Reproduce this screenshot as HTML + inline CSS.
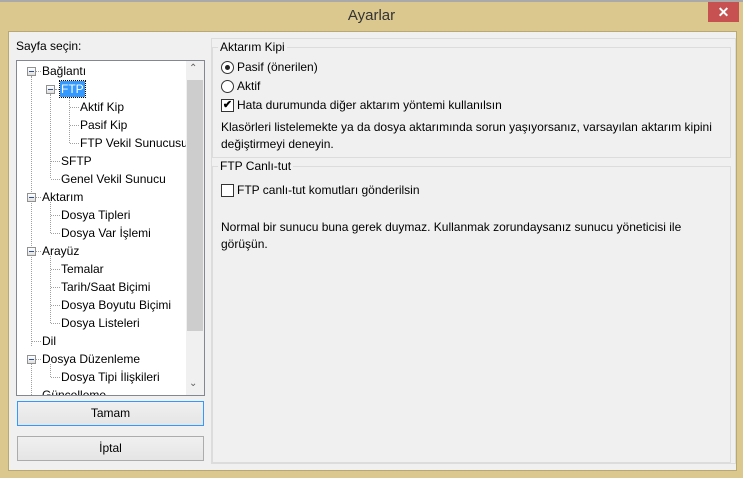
<!DOCTYPE html>
<html><head><meta charset="utf-8"><style>
*{margin:0;padding:0;box-sizing:border-box}
body{width:743px;height:478px;background:#dbc88f;font-family:"Liberation Sans",sans-serif;font-size:12px;color:#000;position:relative;overflow:hidden}
.a{position:absolute;white-space:nowrap}
.top{left:0;top:0;width:743px;height:2px;background:#a9a9a9}
.title{left:0;top:7px;width:743px;text-align:center;font-size:15px;color:#333}
.close{left:708px;top:2px;width:31px;height:20px;background:#c75050;color:#fff;text-align:center;font-size:14px;line-height:20px;font-weight:bold}
.client{left:8px;top:31px;width:729px;height:440px;background:#f0f0f0;border:1px solid #b9a874}
.tree{left:16px;top:60px;width:189px;height:336px;background:#fff;border:1px solid #828790;overflow:hidden}
.sb{left:186px;top:61px;width:18px;height:334px;background:#f0f0f0}
.thumb{left:187px;top:80px;width:16px;height:251px;background:#cdcdcd}
.btn{left:17px;width:187px;height:25px;background:linear-gradient(#f0f0f0,#e5e5e5);border:1px solid #acacac;text-align:center;line-height:23px}
.panel{left:211px;top:38px;width:525px;height:426px;border:1px solid #dcdcdc}
.grp{border:1px solid #dcdcdc}
.lbl{background:#f0f0f0;padding:0 2px}
.exp{width:9px;height:9px;border:1px solid #919191;background:linear-gradient(#fff,#e0e0e0)}
.exp:after{content:"";position:absolute;left:1px;top:3px;width:5px;height:1px;background:#2f4f8f}
.dv{border-left:1px dotted #a0a0a0;width:0}
.dh{border-top:1px dotted #a0a0a0;height:0}
.rad{width:13px;height:13px;border-radius:50%;border:1px solid #333;background:#fff}
.chk{width:13px;height:13px;border:1px solid #333;background:#fff}
</style></head><body>
<div class="a top"></div>
<div class="a title">Ayarlar</div>
<div class="a close">✕</div>
<div class="a client"></div>
<div class="a" style="left:16px;top:39px">Sayfa seçin:</div>
<div class="a tree"></div>
<!-- tree lines -->
<div class="a dv" style="left:31px;top:76px;height:270px"></div>
<div class="a dv" style="left:50px;top:94px;height:84px"></div>
<div class="a dv" style="left:69px;top:96px;height:47px"></div>
<div class="a dv" style="left:50px;top:202px;height:31px"></div>
<div class="a dv" style="left:50px;top:256px;height:67px"></div>
<div class="a dv" style="left:50px;top:364px;height:13px"></div>
<div class="a dv" style="left:31px;top:364px;height:31px"></div>
<div class="a dh" style="left:36px;top:71px;width:5px"></div>
<div class="a dh" style="left:55px;top:89px;width:4px"></div>
<div class="a dh" style="left:70px;top:107px;width:9px"></div>
<div class="a dh" style="left:70px;top:125px;width:9px"></div>
<div class="a dh" style="left:70px;top:143px;width:9px"></div>
<div class="a dh" style="left:51px;top:161px;width:9px"></div>
<div class="a dh" style="left:51px;top:179px;width:9px"></div>
<div class="a dh" style="left:36px;top:197px;width:5px"></div>
<div class="a dh" style="left:51px;top:215px;width:9px"></div>
<div class="a dh" style="left:51px;top:233px;width:9px"></div>
<div class="a dh" style="left:36px;top:251px;width:5px"></div>
<div class="a dh" style="left:51px;top:269px;width:9px"></div>
<div class="a dh" style="left:51px;top:287px;width:9px"></div>
<div class="a dh" style="left:51px;top:305px;width:9px"></div>
<div class="a dh" style="left:51px;top:323px;width:9px"></div>
<div class="a dh" style="left:32px;top:341px;width:9px"></div>
<div class="a dh" style="left:36px;top:359px;width:5px"></div>
<div class="a dh" style="left:51px;top:377px;width:9px"></div>
<div class="a exp" style="left:27px;top:67px"></div>
<div class="a exp" style="left:46px;top:85px"></div>
<div class="a exp" style="left:27px;top:193px"></div>
<div class="a exp" style="left:27px;top:247px"></div>
<div class="a exp" style="left:27px;top:355px"></div>
<div class="a" style="left:42px;top:64px">Bağlantı</div>
<div class="a" style="left:60px;top:81px;background:#3399ff;color:#fff;padding:0 1px;height:16px;line-height:16px;outline:1px dotted #000">FTP</div>
<div class="a" style="left:80px;top:100px">Aktif Kip</div>
<div class="a" style="left:80px;top:118px">Pasif Kip</div>
<div class="a" style="left:80px;top:136px">FTP Vekil Sunucusu</div>
<div class="a" style="left:61px;top:154px">SFTP</div>
<div class="a" style="left:61px;top:172px">Genel Vekil Sunucu</div>
<div class="a" style="left:42px;top:190px">Aktarım</div>
<div class="a" style="left:61px;top:208px">Dosya Tipleri</div>
<div class="a" style="left:61px;top:226px">Dosya Var İşlemi</div>
<div class="a" style="left:42px;top:244px">Arayüz</div>
<div class="a" style="left:61px;top:262px">Temalar</div>
<div class="a" style="left:61px;top:280px">Tarih/Saat Biçimi</div>
<div class="a" style="left:61px;top:298px">Dosya Boyutu Biçimi</div>
<div class="a" style="left:61px;top:316px">Dosya Listeleri</div>
<div class="a" style="left:42px;top:334px">Dil</div>
<div class="a" style="left:42px;top:352px">Dosya Düzenleme</div>
<div class="a" style="left:61px;top:370px">Dosya Tipi İlişkileri</div>
<div class="a" style="left:42px;top:388px;height:7px;overflow:hidden">Güncelleme</div>
<div class="a sb"></div>
<div class="a thumb"></div>
<div class="a" style="left:189px;top:63px;font-size:10px;color:#606060">⌃</div>
<div class="a" style="left:189px;top:378px;font-size:10px;color:#606060">⌄</div>
<div class="a btn" style="top:401px;border-color:#3399ff">Tamam</div>
<div class="a btn" style="top:436px">İptal</div>
<div class="a panel"></div>
<div class="a grp" style="left:212px;top:47px;width:519px;height:111px"></div>
<div class="a lbl" style="left:218px;top:40px">Aktarım Kipi</div>
<div class="a rad" style="left:221px;top:61px"><div style="position:absolute;left:3px;top:3px;width:5px;height:5px;border-radius:50%;background:#222"></div></div>
<div class="a" style="left:237px;top:60px">Pasif (önerilen)</div>
<div class="a rad" style="left:221px;top:80px"></div>
<div class="a" style="left:237px;top:79px">Aktif</div>
<div class="a chk" style="left:221px;top:99px;font-size:11px;line-height:11px;text-align:center;font-weight:bold">✔</div>
<div class="a" style="left:237px;top:98px">Hata durumunda diğer aktarım yöntemi kullanılsın</div>
<div class="a" style="left:221px;top:119px;line-height:17px">Klasörleri listelemekte ya da dosya aktarımında sorun yaşıyorsanız, varsayılan aktarım kipini<br>değiştirmeyi deneyin.</div>
<div class="a grp" style="left:212px;top:166px;width:519px;height:297px"></div>
<div class="a lbl" style="left:218px;top:159px">FTP Canlı-tut</div>
<div class="a chk" style="left:221px;top:184px"></div>
<div class="a" style="left:237px;top:183px">FTP canlı-tut komutları gönderilsin</div>
<div class="a" style="left:221px;top:219px;line-height:17px">Normal bir sunucu buna gerek duymaz. Kullanmak zorundaysanız sunucu yöneticisi ile<br>görüşün.</div>
</body></html>
